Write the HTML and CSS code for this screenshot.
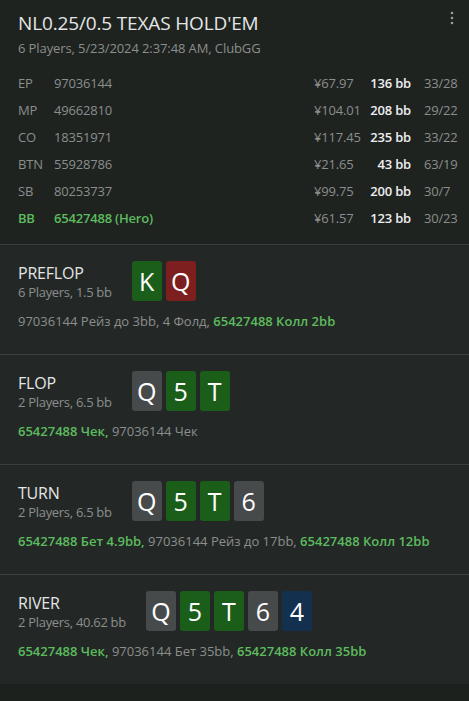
FILE: index.html
```html
<!DOCTYPE html>
<html lang="en">
<head>
    <meta charset="UTF-8">
    <meta name="viewport" content="width=device-width, initial-scale=1.0">
    <title>Hand History</title>
    <link rel="stylesheet" href="styles.css">
</head>
<body>
    <div class="hand">
        <!-- Hand header -->
        <div class="header">
            <div class="title-row">
                <h1 class="title">NL0.25/0.5 TEXAS HOLD'EM</h1>
                <svg class="menu" width="4" height="14" viewBox="0 0 4 14">
                    <circle cx="2" cy="2" r="1.3" fill="#9a9d9b"/>
                    <circle cx="2" cy="7" r="1.3" fill="#9a9d9b"/>
                    <circle cx="2" cy="12" r="1.3" fill="#9a9d9b"/>
                </svg>
            </div>
            <div class="sub">6 Players, 5/23/2024 2:37:48 AM, ClubGG</div>

            <div class="players">
                <div class="player">
                    <span>EP</span><span>97036144</span><span>¥67.97</span><span class="bb">136 bb</span><span class="stat">33/28</span>
                </div>
                <div class="player">
                    <span>MP</span><span>49662810</span><span>¥104.01</span><span class="bb">208 bb</span><span class="stat">29/22</span>
                </div>
                <div class="player">
                    <span>CO</span><span>18351971</span><span>¥117.45</span><span class="bb">235 bb</span><span class="stat">33/22</span>
                </div>
                <div class="player">
                    <span>BTN</span><span>55928786</span><span>¥21.65</span><span class="bb">43 bb</span><span class="stat">63/19</span>
                </div>
                <div class="player">
                    <span>SB</span><span>80253737</span><span>¥99.75</span><span class="bb">200 bb</span><span class="stat">30/7</span>
                </div>
                <div class="player hero">
                    <span>BB</span><span>65427488 (Hero)</span><span>¥61.57</span><span class="bb">123 bb</span><span class="stat">30/23</span>
                </div>
            </div>
        </div>

        <!-- Streets -->
        <div class="street">
            <div class="street-top">
                <div class="street-info">
                    <div class="street-name">PREFLOP</div>
                    <div class="street-sub">6 Players, 1.5 bb</div>
                </div>
                <div class="cards">
                    <span class="card green">K</span>
                    <span class="card red">Q</span>
                </div>
            </div>
            <div class="actions">97036144 Рейз до 3bb, 4 Фолд, <b>65427488 Колл 2bb</b></div>
        </div>

        <div class="street">
            <div class="street-top">
                <div class="street-info">
                    <div class="street-name">FLOP</div>
                    <div class="street-sub">2 Players, 6.5 bb</div>
                </div>
                <div class="cards">
                    <span class="card gray">Q</span>
                    <span class="card green">5</span>
                    <span class="card green">T</span>
                </div>
            </div>
            <div class="actions"><b>65427488 Чек,</b> 97036144 Чек</div>
        </div>

        <div class="street">
            <div class="street-top">
                <div class="street-info">
                    <div class="street-name">TURN</div>
                    <div class="street-sub">2 Players, 6.5 bb</div>
                </div>
                <div class="cards">
                    <span class="card gray">Q</span>
                    <span class="card green">5</span>
                    <span class="card green">T</span>
                    <span class="card gray">6</span>
                </div>
            </div>
            <div class="actions"><b>65427488 Бет 4.9bb,</b> 97036144 Рейз до 17bb, <b>65427488 Колл 12bb</b></div>
        </div>

        <div class="street">
            <div class="street-top">
                <div class="street-info">
                    <div class="street-name">RIVER</div>
                    <div class="street-sub">2 Players, 40.62 bb</div>
                </div>
                <div class="cards">
                    <span class="card gray">Q</span>
                    <span class="card green">5</span>
                    <span class="card green">T</span>
                    <span class="card gray">6</span>
                    <span class="card blue">4</span>
                </div>
            </div>
            <div class="actions"><b>65427488 Чек,</b> 97036144 Бет 35bb, <b>65427488 Колл 35bb</b></div>
        </div>
    </div>
</body>
</html>
```

FILE: styles.css
```css
/* Page */
body {
    margin: 0;
    background-color: #1c211e;
    font-family: "Open Sans", "Noto Sans", Arial, sans-serif;
    color: #8b8e8c;
}

.hand {
    width: 469px;
}

/* Header */
.header {
    background-color: #1e2320;
    padding: 11px 12px 13px 18px;
}

.title-row {
    display: flex;
    justify-content: space-between;
    align-items: flex-start;
}

.title {
    margin: 0;
    font-size: 19px;
    font-weight: 400;
    line-height: 24px;
    color: #e4e6e5;
    letter-spacing: -0.15px;
}

.menu {
    margin-top: 0;
    margin-right: 3px;
}

.sub {
    margin-top: 4px;
    font-size: 13px;
    line-height: 18px;
    letter-spacing: -0.1px;
}

/* Players table */
.players {
    margin-top: 12px;
}

.player {
    display: grid;
    grid-template-columns: 36px 1fr 55px 42px 46px;
    height: 27px;
    align-items: center;
    font-size: 13px;
    letter-spacing: -0.2px;
}

.player .bb {
    justify-self: end;
    color: #eeeeee;
    font-weight: 600;
}

.player .stat {
    padding-left: 13px;
}

.player.hero span:nth-child(1),
.player.hero span:nth-child(2) {
    color: #5dbb5d;
    font-weight: 600;
}

/* Streets */
.street {
    background-color: #232827;
    border-top: 1px solid #3a3e3d;
    height: 110px;
    box-sizing: border-box;
    padding: 16px 18px 0 18px;
}

.street-top {
    display: flex;
    gap: 20px;
    align-items: flex-start;
}

.street-info {
    padding-top: 2px;
}

.street-name {
    font-size: 16px;
    line-height: 20px;
    color: #e4e6e5;
    letter-spacing: -0.2px;
}

.street-sub {
    font-size: 13px;
    line-height: 18px;
    letter-spacing: -0.3px;
}

.cards {
    display: flex;
    gap: 4px;
}

.card {
    width: 30px;
    height: 40px;
    border-radius: 3px;
    display: flex;
    align-items: center;
    justify-content: center;
    font-size: 25px;
    color: #ffffff;
}

.card.green { background-color: #1b5e1a; }
.card.red { background-color: #7c1f1e; }
.card.gray { background-color: #474a4a; }
.card.blue { background-color: #13314f; }

.actions {
    margin-top: 11px;
    font-size: 13px;
    line-height: 18px;
}

.actions b {
    color: #5dbb5d;
    font-weight: 600;
}
```
